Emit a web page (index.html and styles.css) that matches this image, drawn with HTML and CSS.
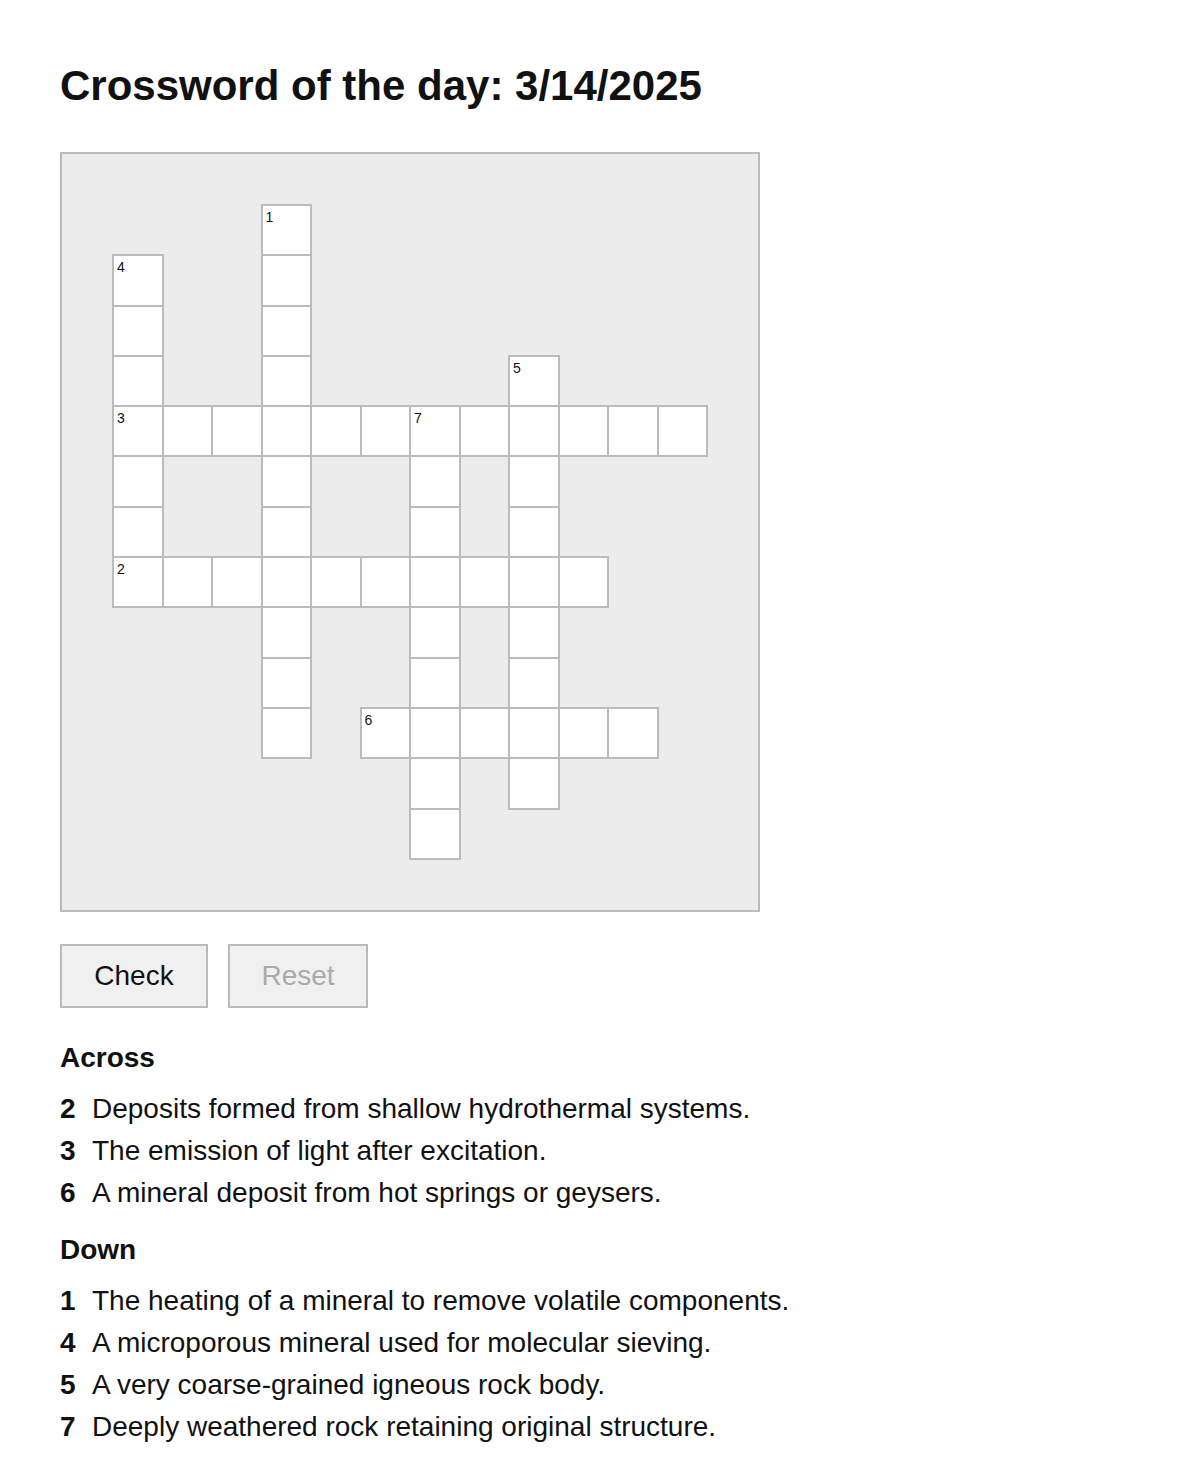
FILE: index.html
```html
<!DOCTYPE html>
<html lang="en">
<head>
    <meta charset="UTF-8">
    <meta name="viewport" content="width=device-width, initial-scale=1.0">
    <title>Crossword of the day</title>
    <link rel="stylesheet" href="styles.css">
</head>
<body>
    <div class="page">
        <h1 class="title">Crossword of the day: 3/14/2025</h1>

        <div class="board">
            <div class="grid" id="grid"></div>
        </div>

        <div class="actions">
            <button type="button" class="btn btn-check">Check</button>
            <button type="button" class="btn btn-reset" disabled>Reset</button>
        </div>

        <div class="clues">
            <h2>Across</h2>
            <ol class="clue-list">
                <li><span class="num">2</span>Deposits formed from shallow hydrothermal systems.</li>
                <li><span class="num">3</span>The emission of light after excitation.</li>
                <li><span class="num">6</span>A mineral deposit from hot springs or geysers.</li>
            </ol>

            <h2>Down</h2>
            <ol class="clue-list">
                <li><span class="num">1</span>The heating of a mineral to remove volatile components.</li>
                <li><span class="num">4</span>A microporous mineral used for molecular sieving.</li>
                <li><span class="num">5</span>A very coarse-grained igneous rock body.</li>
                <li><span class="num">7</span>Deeply weathered rock retaining original structure.</li>
            </ol>
        </div>
    </div>

    <script src="grid.js"></script>
</body>
</html>
```

FILE: grid.js
```js
// word layout: number, row, col, direction, length
var words = [
    [1, 0, 3, 'down', 11],
    [4, 1, 0, 'down', 7],
    [5, 3, 8, 'down', 9],
    [3, 4, 0, 'across', 12],
    [7, 4, 6, 'down', 9],
    [2, 7, 0, 'across', 10],
    [6, 10, 5, 'across', 6]
];

var grid = document.getElementById('grid');
var cells = {};

words.forEach(function (w) {
    for (var i = 0; i < w[4]; i++) {
        var r = w[3] === 'down' ? w[1] + i : w[1];
        var c = w[3] === 'across' ? w[2] + i : w[2];
        var key = r + ',' + c;
        if (!cells[key]) {
            var cell = document.createElement('div');
            cell.className = 'cell';
            // +2 skips the empty margin track round the board
            cell.style.gridRow = (r + 2);
            cell.style.gridColumn = (c + 2);
            grid.appendChild(cell);
            cells[key] = cell;
        }
        if (i === 0) {
            var n = document.createElement('span');
            n.className = 'cell-num';
            n.textContent = w[0];
            cells[key].appendChild(n);
        }
    }
});
```

FILE: styles.css
```css
body {
    margin: 0;
    font-family: 'Liberation Sans', Arial, sans-serif;
    color: #111;
    background-color: white;
}

.page {
    padding: 0 60px 40px;
}

.title {
    margin: 0;
    padding-top: 62px;
    font-size: 42px;
    font-weight: 700;
    line-height: 48px;
}

.board {
    width: 696px;
    height: 756px;
    margin-top: 42px;
    border: 2px solid #bbb;
    background-color: #ececec;
}

.grid {
    display: grid;
    grid-template-columns: 50px repeat(12, 49.5px) 1fr;
    grid-template-rows: 50px repeat(13, 50.3px) 1fr;
    width: 100%;
    height: 100%;
}

.cell {
    position: relative;
    width: calc(100% + 2px);
    height: calc(100% + 2px);
    box-sizing: border-box;
    border: 2px solid #bbb;
    background-color: white;
}

.cell-num {
    position: absolute;
    top: 3px;
    left: 3px;
    font-size: 14px;
    line-height: 16px;
    color: #111;
}

.actions {
    display: flex;
    gap: 20px;
    margin-top: 32px;
}

.btn {
    height: 64px;
    padding: 0;
    border: 2px solid #bbb;
    background-color: #f0f0f0;
    font-family: inherit;
    font-size: 28px;
    color: #111;
}

.btn-check {
    width: 148px;
}

.btn-reset {
    width: 140px;
}

.btn:disabled {
    color: #aaa;
}

.clues {
    padding-top: 14px;
}

.clues h2 {
    margin: 20px 0 14px;
    font-size: 28px;
    line-height: 32px;
    font-weight: 700;
}

.clue-list {
    margin: 0;
    padding: 0;
    list-style: none;
}

.clue-list li {
    display: flex;
    font-size: 28px;
    line-height: 42px;
}

.clue-list .num {
    width: 32px;
    flex-shrink: 0;
    font-weight: 700;
}
```
